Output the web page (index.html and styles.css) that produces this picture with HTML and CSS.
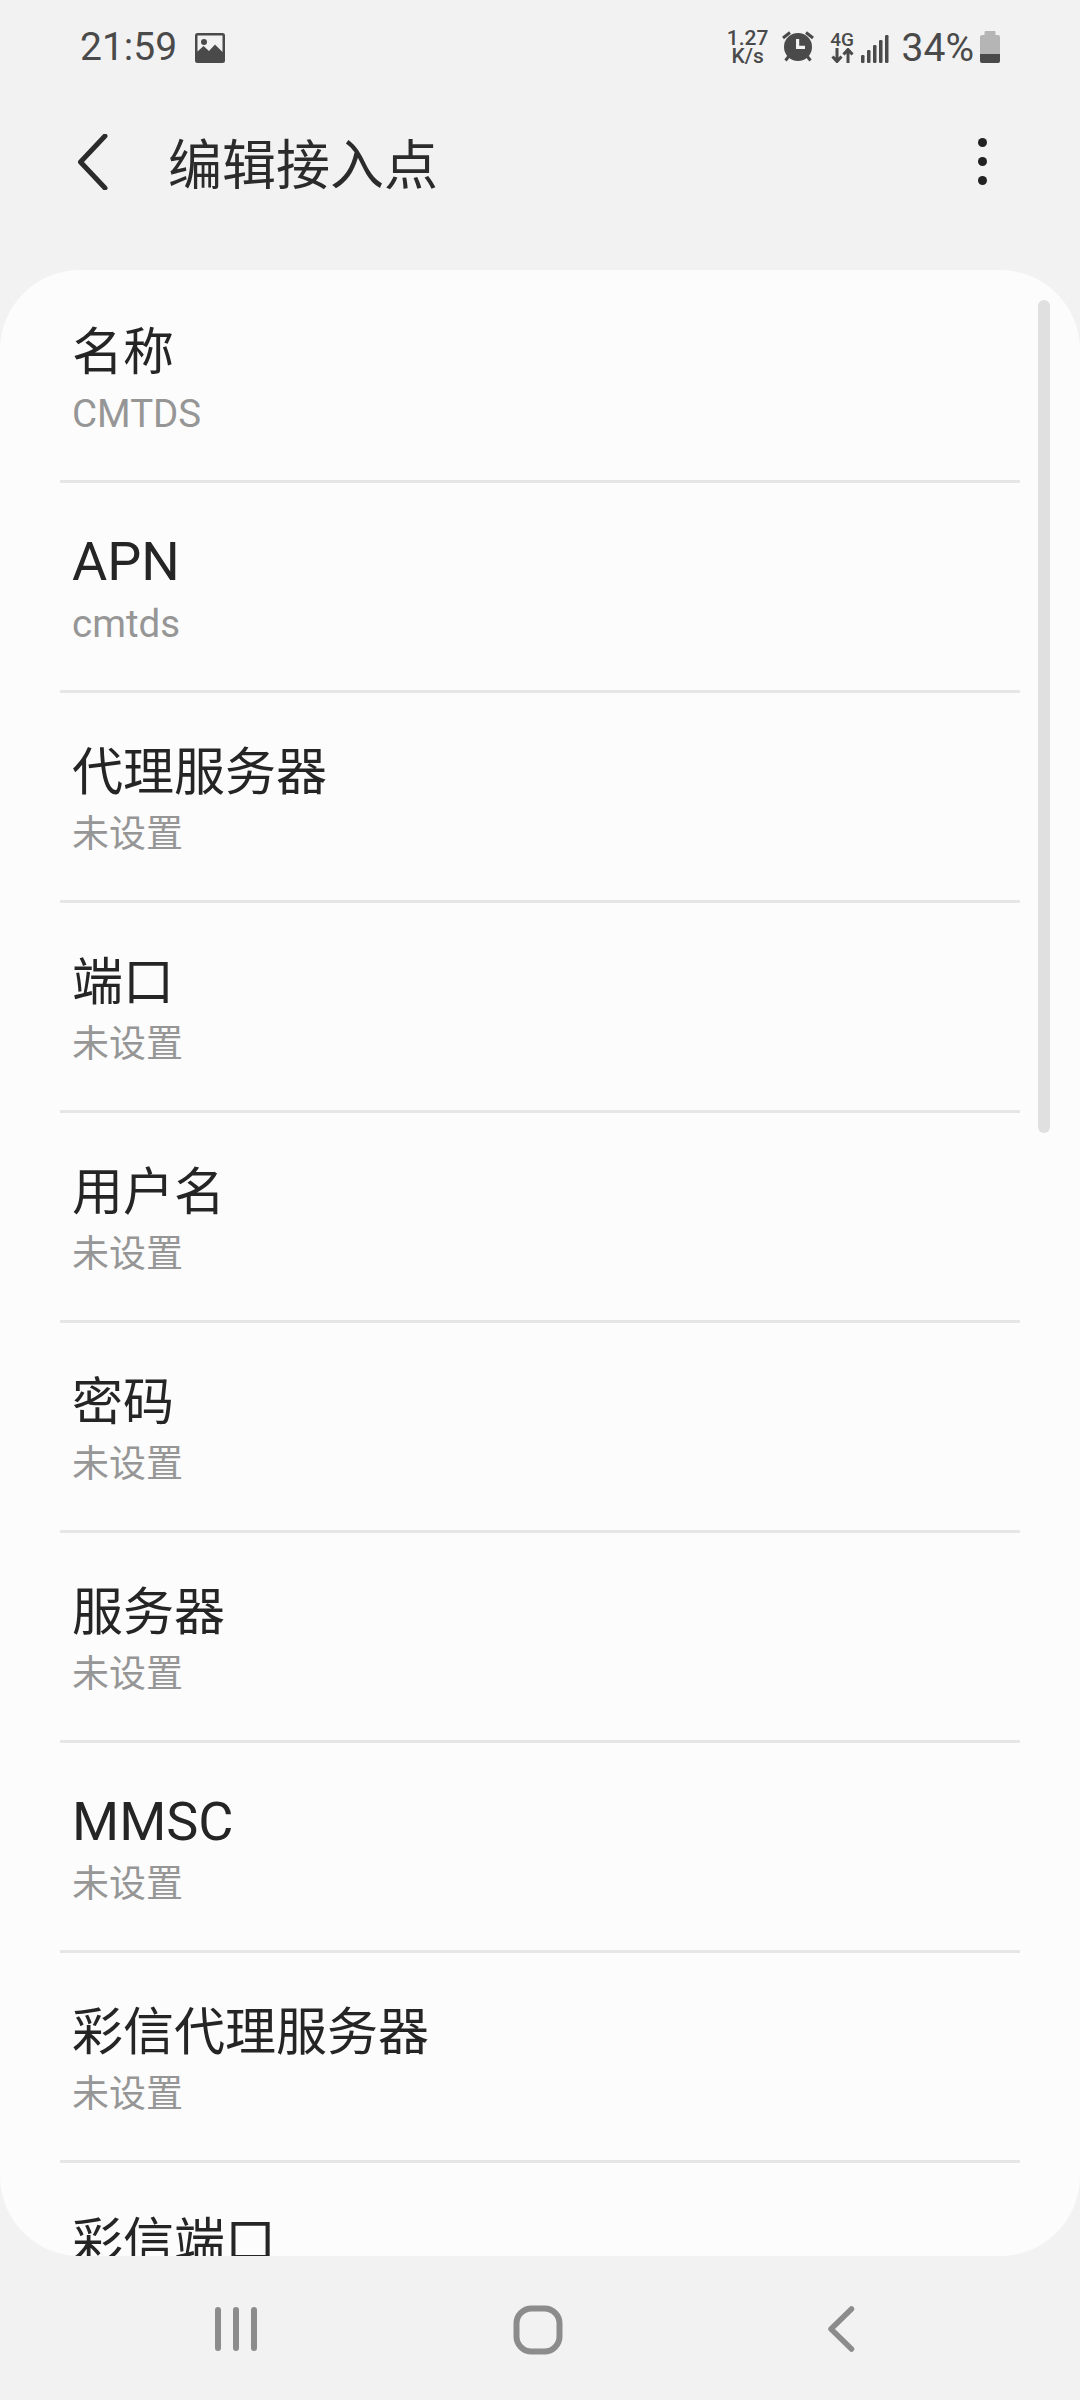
FILE: index.html
```html
<!DOCTYPE html>
<html lang="zh-CN">
<head>
<meta charset="utf-8">
<title>编辑接入点</title>
<link rel="stylesheet" href="styles.css">
</head>
<body>
<div class="screen">
  <div class="statusbar">
    <div class="status-left">
      <span class="clock">21:59</span>
      <svg class="ic-image" width="30" height="30" viewBox="0 0 30 30"><path fill="#4a4a4a" fill-rule="evenodd" d="M2.500 0h25A2.500 2.500 0 0 1 30 2.500v25a2.500 2.500 0 0 1-2.500 2.500h-25A2.500 2.500 0 0 1 0 27.500v-25A2.500 2.500 0 0 1 2.500 0zM2.500 2.500v16l6-5.500 5.500 5 6-6.500 7.500 7.500V2.500zM9 6a3 3 0 1 1 0 6 3 3 0 0 1 0-6z"/></svg>
    </div>
    <div class="status-right">
      <span class="speed"><span>1.27</span><span class="speed-unit">K/s</span></span>
      <svg class="ic-alarm" width="34" height="32" viewBox="0 0 34 32"><g stroke="#4a4a4a" stroke-width="3" fill="none"><path d="M9 1.500 2 7M25 1.500l7 5.500M8 25l-3.500 4.500M26 25l3.500 4.500"/></g><path fill="#4a4a4a" fill-rule="evenodd" d="M17 3a14 14 0 1 1 0 28 14 14 0 0 1 0-28zM15 9v10h9v-3.200h-5.800V9z" transform="translate(0 -1)"/></svg>
      <span class="net"><span class="net-label">4G</span><svg width="23" height="15" viewBox="0 0 23 15"><path d="M6 0v13M1.500 8.500 6 13.500l4.500-5M17 15V2M12.500 6.500 17 1.500l4.500 5" fill="none" stroke="#4a4a4a" stroke-width="3"/></svg></span>
      <svg class="ic-signal" width="28" height="28" viewBox="0 0 28 28"><g fill="#4a4a4a"><rect x="0" y="20" width="3.500" height="8" rx="1.200"/><rect x="6" y="15" width="3.500" height="13" rx="1.200"/><rect x="12" y="10" width="3.500" height="18" rx="1.200"/><rect x="18" y="5" width="3.500" height="23" rx="1.200"/><rect x="24" y="0" width="3.500" height="28" rx="1.200"/></g></svg>
      <span class="percent">34%</span>
      <svg class="ic-battery" width="20" height="32" viewBox="0 0 20 32"><path fill="#b5b5b5" d="M5.500 0h9a1 1 0 0 1 1 1v3H18a2 2 0 0 1 2 2v17H0V6a2 2 0 0 1 2-2h2.500V1a1 1 0 0 1 1-1z"/><path fill="#4a4a4a" d="M0 23h20v7a2 2 0 0 1-2 2H2a2 2 0 0 1-2-2z"/></svg>
    </div>
  </div>

  <header class="appbar">
    <svg class="ic-back" width="30" height="56" viewBox="0 0 30 56"><path d="M27 2 2.500 28 27 54" fill="none" stroke="#2b2b2b" stroke-width="5" stroke-linecap="round" stroke-linejoin="round"/></svg>
    <h1 class="appbar-title">编辑接入点</h1>
    <div class="more"><i></i><i></i><i></i></div>
  </header>

  <main class="card">
    <div class="row"><div class="row-title">名称</div><div class="row-sub latin">CMTDS</div></div>
    <div class="row"><div class="row-title latin">APN</div><div class="row-sub latin">cmtds</div></div>
    <div class="row"><div class="row-title">代理服务器</div><div class="row-sub">未设置</div></div>
    <div class="row"><div class="row-title">端口</div><div class="row-sub">未设置</div></div>
    <div class="row"><div class="row-title">用户名</div><div class="row-sub">未设置</div></div>
    <div class="row"><div class="row-title">密码</div><div class="row-sub">未设置</div></div>
    <div class="row"><div class="row-title">服务器</div><div class="row-sub">未设置</div></div>
    <div class="row"><div class="row-title latin">MMSC</div><div class="row-sub">未设置</div></div>
    <div class="row"><div class="row-title">彩信代理服务器</div><div class="row-sub">未设置</div></div>
    <div class="row"><div class="row-title">彩信端口</div><div class="row-sub">未设置</div></div>
    <div class="scrollbar"></div>
  </main>

  <nav class="navbar">
    <svg width="42" height="44" viewBox="0 0 42 44"><g fill="#8c8c8c"><rect x="0" y="0" width="6" height="44" rx="3"/><rect x="18" y="0" width="6" height="44" rx="3"/><rect x="36" y="0" width="6" height="44" rx="3"/></g></svg>
    <svg width="50" height="50" viewBox="0 0 50 50"><rect x="3.500" y="3.500" width="43" height="43" rx="15" fill="none" stroke="#8c8c8c" stroke-width="6"/></svg>
    <svg width="28" height="46" viewBox="0 0 28 46"><path d="M23.500 3 3 23l20.500 20" fill="none" stroke="#8c8c8c" stroke-width="5.500" stroke-linecap="round" stroke-linejoin="round"/></svg>
  </nav>
</div>
</body>
</html>
```

FILE: styles.css
```css
* { box-sizing: border-box; }
html, body { margin: 0; padding: 0; }
body {
  background: #f2f2f2;
  font-family: Roboto, "Noto Sans CJK SC", sans-serif;
  color: #252525;
}
.screen {
  width: 1080px;
  height: 2400px;
  display: flex;
  flex-direction: column;
  overflow: hidden;
}
.statusbar {
  height: 64px;
  flex: none;
  padding: 30px 80px 0 80px;
  display: flex;
  justify-content: space-between;
  align-items: flex-start;
  color: #4a4a4a;
}
.status-left { display: flex; align-items: center; gap: 19px; height: 34px; }
.status-right { display: flex; align-items: flex-start; height: 34px; }
.clock { font-size: 39px; line-height: 34px; }
.ic-image { margin-top: 2px; margin-left: -1px; }
.speed {
  display: flex;
  flex-direction: column;
  align-items: center;
  width: 38px;
  margin: 0 -2px 0 2px;
  font-size: 21px;
  font-weight: 500;
  line-height: 17px;
}
.speed-unit { line-height: 18px; }
.ic-alarm { margin-left: 16px; margin-top: 1px; }
.net {
  display: flex;
  flex-direction: column;
  align-items: center;
  width: 23px;
  margin-left: 16px;
  margin-top: 1px;
}
.net-label { font-size: 19px; font-weight: 500; line-height: 17px; }
.ic-signal { margin-left: 7px; margin-top: 5px; }
.percent { font-size: 39px; line-height: 34px; margin-left: 13px; margin-top: 1px; }
.ic-battery { margin-left: 6px; margin-top: 1px; }

.appbar {
  height: 206px;
  flex: none;
  position: relative;
  display: flex;
  align-items: flex-start;
  padding: 70px 0 0 78px;
}
.ic-back { flex: none; }
.appbar-title {
  margin: 5px 0 0 60px;
  font-size: 54px;
  font-weight: 400;
  line-height: 56px;
  color: #2b2b2b;
}
.more {
  display: flex;
  flex-direction: column;
  gap: 10px;
  margin-left: auto;
  margin-right: 93px;
  padding-top: 4px;
}
.more i { display: block; width: 9px; height: 9px; border-radius: 50%; background: #222; }

.card {
  flex: 1;
  position: relative;
  min-height: 0;
  overflow: hidden;
  background: #fcfcfc;
  border-radius: 80px;
  padding-top: 3px;
}
.row {
  height: 210px;
  margin: 0 60px;
  padding: 47px 0 0 12px;
  border-bottom: 3px solid #e6e6e6;
}
.row-title { font-size: 51px; line-height: 66px; color: #252525; }
.row-title.latin { font-size: 54px; line-height: 64px; }
.row-sub { font-size: 37px; line-height: 50px; color: #969696; margin-top: 4px; }
.row-title.latin + .row-sub { margin-top: 6px; }
.row-sub.latin { font-size: 38.500px; margin-top: 3px; }
.row-title.latin + .row-sub.latin { margin-top: 5px; }
.scrollbar {
  position: absolute;
  top: 30px;
  right: 30px;
  width: 12px;
  height: 833px;
  border-radius: 6px;
  background: #e0e0e0;
}
.navbar {
  height: 144px;
  flex: none;
  display: grid;
  grid-template-columns: 215px 42px 256px 50px 265px 28px;
  align-items: start;
  padding-top: 50px;
}
.navbar svg:nth-child(1) { grid-column: 2; margin-top: 1px; }
.navbar svg:nth-child(2) { grid-column: 4; margin-top: -1px; }
.navbar svg:nth-child(3) { grid-column: 6; }
```
